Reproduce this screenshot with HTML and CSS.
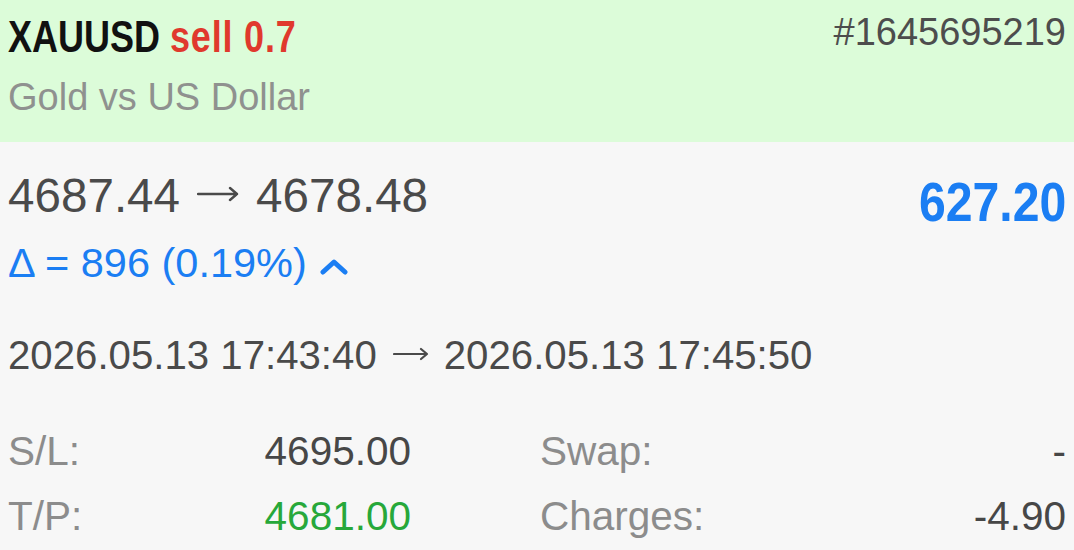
FILE: index.html
```html
<!DOCTYPE html>
<html lang="en">
<head>
<meta charset="UTF-8">
<meta name="viewport" content="width=device-width, initial-scale=1.0">
<title>XAUUSD sell 0.7</title>
<link rel="stylesheet" href="styles.css">
</head>
<body>

<div class="header">
<div class="top-row">
<div class="title">XAUUSD <span class="side">sell 0.7</span></div>
<div class="ticket">#1645695219</div>
</div>
<div class="desc">Gold vs US Dollar</div>
</div>

<div class="body">
<div class="price-row">
<div class="prices"><span>4687.44</span><svg class="arrow-big" width="42" height="30" viewBox="0 0 42 30">
<path d="M1 12 H40 M33 6 L40 12 L33 18" fill="none" stroke="#4a4a4a" stroke-width="2.4" stroke-linecap="round" stroke-linejoin="round"/>
</svg><span>4678.48</span></div>
<div class="profit">627.20</div>
</div>
<div class="delta">&Delta; = 896 (0.19%)
<svg class="chev" width="28" height="18" viewBox="0 0 28 18">
<path d="M3 15 L14 5 L25 15" fill="none" stroke="#1b7ef3" stroke-width="5" stroke-linecap="round" stroke-linejoin="round"/>
</svg>
</div>
<div class="times"><span>2026.05.13 17:43:40</span><svg class="arrow-small" width="36" height="26" viewBox="0 0 36 26">
<path d="M1 11 H34 M28 6 L34 11 L28 16" fill="none" stroke="#4a4a4a" stroke-width="2.2" stroke-linecap="round" stroke-linejoin="round"/>
</svg><span>2026.05.13 17:45:50</span></div>

<div class="details">
<div class="pair"><span class="label">S/L:</span><span class="value">4695.00</span></div>
<div class="pair"><span class="label">Swap:</span><span class="value">-</span></div>
<div class="pair"><span class="label">T/P:</span><span class="value green">4681.00</span></div>
<div class="pair"><span class="label">Charges:</span><span class="value">-4.90</span></div>
</div>
</div>

</body>
</html>
```

FILE: styles.css
```css
body {
font-family: "Liberation Sans", Arial, sans-serif;
background-color: #f7f7f7;
margin: 0;
}
.header {
background-color: #dcfcd9;
height: 142px;
padding: 0 8px;
box-sizing: border-box;
}
.top-row {
display: flex;
justify-content: space-between;
align-items: flex-start;
}
.title {
font-weight: bold;
font-size: 45px;
line-height: 50px;
margin-top: 12px;
color: #111;
white-space: nowrap;
transform: scaleX(0.8);
transform-origin: left center;
}
.side {
color: #e0392d;
letter-spacing: 1px;
}
.ticket {
font-size: 38px;
line-height: 50px;
margin-top: 7px;
color: #4d4d4d;
}
.desc {
font-size: 38px;
line-height: 46px;
margin-top: 12px;
color: #8f918f;
}
.body {
padding: 26px 8px 0 8px;
}
.price-row {
display: flex;
justify-content: space-between;
align-items: flex-start;
}
.prices {
font-size: 47.6px;
line-height: 56px;
color: #4a4a4a;
}
.arrow-big {
margin: 0 17px 0 17px;
}
.profit {
font-weight: bold;
font-size: 56px;
line-height: 56px;
margin-top: 6px;
color: #1b7ef3;
transform: scaleX(0.86);
transform-origin: right center;
}
.delta {
font-size: 41.5px;
line-height: 50px;
margin-top: 8px;
color: #1b7ef3;
}
.chev {
margin-left: 2px;
vertical-align: 2px;
}
.times {
font-size: 40.2px;
line-height: 50px;
margin-top: 43px;
color: #4a4a4a;
}
.arrow-small {
margin: 0 15px 0 16px;
}
.details {
display: grid;
grid-template-columns: 403px 1fr;
column-gap: 129px;
margin-top: 38px;
}
.pair {
display: flex;
justify-content: space-between;
font-size: 40.5px;
line-height: 65px;
}
.label {
color: #8c8c8c;
}
.value {
color: #474747;
}
.green {
color: #27a83a;
}
```
